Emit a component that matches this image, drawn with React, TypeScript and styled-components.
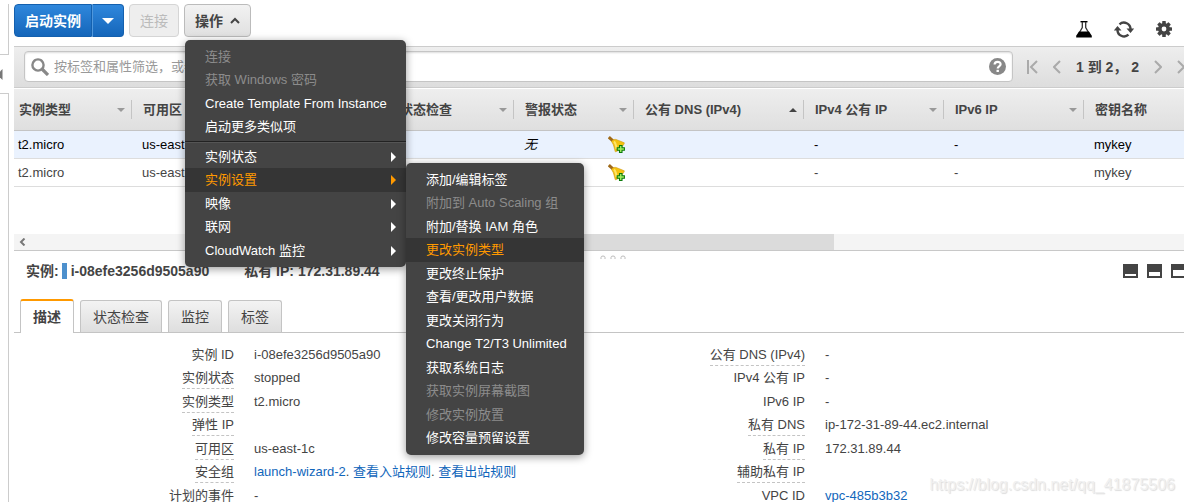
import React from "react";
import styled, { createGlobalStyle, css } from "styled-components";

const GlobalStyle = createGlobalStyle`
  * { box-sizing: border-box; }
  body {
    margin: 0;
    background: #fff;
    color: #444;
    font: 13px/20px "Liberation Sans", "Noto Sans CJK SC", sans-serif;
  }
  button, input { font: inherit; color: inherit; }
  ul, dl, dd, dt { margin: 0; padding: 0; list-style: none; }
`;

const Page = styled.div`
  position: relative;
  display: flex;
  gap: 5px;
  height: 100vh;
  overflow: hidden;
`;

/* ---- collapsed navigation rail ---- */
const Rail = styled.aside`
  flex: none;
  width: 9px;
  padding-top: 4px;
  display: flex;
  flex-direction: column;
`;
const RailTop = styled.div`
  height: 51px;
  border-right: 1px solid #ccc;
  border-bottom: 1px solid #ccc;
`;
const RailHandle = styled.button`
  height: 38px;
  padding: 0;
  border: 0;
  background: none;
  display: flex;
  align-items: center;
`;
const RailBottom = styled.div`
  flex: 1;
  border-right: 1px solid #ccc;
  border-top: 1px solid #ccc;
`;

/* The workspace runs on past the right edge of the window. */
const Main = styled.main`
  flex: 1;
  min-width: 0;
  margin-right: -28px;
`;

/* ---- toolbar ---- */
const Toolbar = styled.div`
  display: flex;
  gap: 5px;
  height: 46px;
  padding: 4px 40px 0 0;
`;
const Split = styled.div`
  display: flex;
  height: 33px;
`;
const PrimaryButton = styled.button<{ $side: "left" | "right" }>`
  height: 33px;
  padding: 0 10px;
  border: 1px solid #1460ae;
  border-radius: ${(p) => (p.$side === "left" ? "4px 0 0 4px" : "0 4px 4px 0")};
  ${(p) =>
    p.$side === "right" &&
    css`
      padding: 0 9px;
      border-left: 1px solid #4f97dc;
    `}
  background: linear-gradient(#2f87dc, #1566ba);
  color: #fff;
  font-size: 14px;
  font-weight: bold;
  display: flex;
  align-items: center;
`;
const PlainButton = styled.button`
  height: 33px;
  padding: 0 10px;
  border: 1px solid #bbb;
  border-radius: 4px;
  background: linear-gradient(#f2f2f2, #e0e0e0);
  font-size: 14px;
  font-weight: bold;
  display: flex;
  align-items: center;
  gap: 7px;
  &:disabled {
    color: #bbb;
    border-color: #d5d5d5;
    background: #eee;
    font-weight: normal;
  }
`;
const Tools = styled.div`
  display: flex;
  align-items: center;
  gap: 22px;
  height: 50px;
  margin-left: auto;
`;
const IconButton = styled.button`
  display: flex;
  padding: 0;
  border: 0;
  background: none;
`;

/* ---- menus ---- */
const MenuAnchor = styled.div`
  position: relative;
`;
const MenuPanel = styled.div<{ $sub?: boolean }>`
  position: absolute;
  z-index: 5;
  top: ${(p) => (p.$sub ? "-5px" : "36px")};
  left: ${(p) => (p.$sub ? "100%" : "1px")};
  width: ${(p) => (p.$sub ? "178px" : "221px")};
  padding: 5px 0;
  border-radius: 5px;
  background: #444;
  box-shadow: 0 2px 8px rgba(0, 0, 0, 0.4);
`;
const MenuGroup = styled.ul`
  & + & {
    margin-top: 2px;
    padding-top: 3px;
    border-top: 1px solid #222;
    box-shadow: inset 0 1px #555;
  }
`;
const MenuItem = styled.li`
  position: relative;
  height: 23px;
  &:nth-child(even) { height: 24px; }
`;
const MenuButton = styled.button<{ $active?: boolean }>`
  width: 100%;
  height: 100%;
  padding: 0 9px 0 20px;
  border: 0;
  background: ${(p) => (p.$active ? "#353535" : "none")};
  color: ${(p) => (p.$active ? "#f90" : "#fff")};
  display: flex;
  align-items: center;
  justify-content: space-between;
  text-align: left;
  white-space: nowrap;
  &:disabled { color: #8c8c8c; }
`;

/* ---- filter bar ---- */
const FilterBar = styled.div`
  display: flex;
  align-items: center;
  gap: 14px;
  padding: 4px 24px 5px 10px;
  border-top: 1px solid #ccc;
  border-bottom: 1px solid #ccc;
  background: linear-gradient(#eee, #ddd);
`;
const SearchBox = styled.label`
  flex: 1;
  display: flex;
  align-items: center;
  gap: 5px;
  height: 31px;
  padding: 0 6px;
  border: 1px solid #c5c5c5;
  border-radius: 4px;
  background: #fff;
  box-shadow: inset 0 1px 2px #ddd;
`;
const SearchInput = styled.input`
  flex: 1;
  min-width: 0;
  padding: 0;
  border: 0;
  outline: 0;
  background: none;
  &::placeholder { color: #999; opacity: 1; }
`;
const Pager = styled.nav`
  display: flex;
  align-items: center;
  gap: 15px;
  font-size: 14px;
  font-weight: bold;
  white-space: nowrap;
`;

/* ---- instance table ---- */
const Table = styled.table`
  width: 100%;
  table-layout: fixed;
  border-collapse: separate;
  border-spacing: 0;
`;
const HeadCell = styled.th`
  height: 43px;
  padding: 0;
  border-top: 1px solid #fff;
  border-bottom: 1px solid #c4c4c4;
  background: linear-gradient(#eee, #dfdfdf);
`;
const SortButton = styled.button`
  display: flex;
  align-items: center;
  justify-content: space-between;
  width: 100%;
  height: 19px;
  padding: 0 6px 0 11px;
  border: 0;
  border-right: 1px solid #c4c4c4;
  box-shadow: 1px 0 #fff;
  background: none;
  font-weight: bold;
  white-space: nowrap;
  th:first-child & { padding-left: 5px; }
`;
const Row = styled.tr<{ $selected?: boolean }>`
  background: ${(p) => (p.$selected ? "#eaf2fe" : "#fff")};
  color: ${(p) => (p.$selected ? "#000" : "#444")};
`;
const Cell = styled.td`
  height: 28px;
  padding: 0 9px 0 10px;
  border-bottom: 1px solid #ddd;
  white-space: nowrap;
  &:first-child { padding-left: 4px; }
`;
const AlarmCell = styled.div`
  display: flex;
  align-items: center;
  justify-content: space-between;
  font-style: italic;
`;
const ScrollTrack = styled.div`
  display: flex;
  align-items: center;
  gap: 380px;
  height: 17px;
  margin-top: 47px;
  padding-left: 5px;
  border-bottom: 1px solid #c8c8c8;
  background: #f4f4f4;
`;
const ScrollThumb = styled.div`
  width: 428px;
  height: 16px;
  background: #dbdbdb;
`;

/* ---- detail pane ---- */
const Resizer = styled.div`
  display: flex;
  justify-content: center;
  align-items: flex-end;
  height: 8px;
`;
const DetailHead = styled.header`
  display: flex;
  align-items: center;
  height: 24px;
  padding: 0 26px 0 12px;
  font-size: 14px;
  font-weight: bold;
`;
const Marker = styled.i`
  width: 5px;
  height: 16px;
  margin: 0 4px 0 3px;
  background: #4d90cd;
`;
const PrivateIp = styled.span`
  margin-left: 35px;
`;
const LayoutButtons = styled.div`
  display: flex;
  gap: 9px;
  margin-left: auto;
`;
const LayoutButton = styled.button<{ $open: number }>`
  width: 15px;
  height: 14px;
  padding: 0;
  border: 2px solid #444;
  border-top-width: ${(p) => 12 - p.$open}px;
  background: #fff;
`;
const Tabs = styled.div`
  display: flex;
  align-items: flex-end;
  gap: 6px;
  height: 50px;
  padding-left: 6px;
  border-bottom: 1px solid #c4c4c4;
`;
const Tab = styled.button<{ $active?: boolean }>`
  height: 32px;
  padding: 0 12px;
  border: 1px solid #c4c4c4;
  border-bottom: 0;
  border-radius: 3px 3px 0 0;
  background: linear-gradient(#f3f3f3, #dedede);
  font-size: 14px;
  white-space: nowrap;
  ${(p) =>
    p.$active &&
    css`
      height: 34px;
      margin-bottom: -1px;
      border-top: 2px solid #f90;
      background: #fff;
      font-weight: bold;
    `}
`;
const Details = styled.div`
  display: grid;
  grid-template-columns: 1fr 1fr;
  padding: 10px 42px 0 14px;
`;
const DetailRow = styled.div`
  display: grid;
  grid-template-columns: 206px 1fr;
  gap: 20px;
  height: 23px;
  line-height: 23px;
  white-space: nowrap;
  &:nth-child(even) { height: 24px; line-height: 24px; }
`;
const Term = styled.dt<{ $hint?: boolean }>`
  justify-self: end;
  height: 23px;
  border-bottom: ${(p) => (p.$hint ? "1px dashed #c4c4c4" : "0")};
`;
const Link = styled.a`
  color: #1166bb;
  text-decoration: none;
`;
const Watermark = styled.div`
  position: absolute;
  right: 9px;
  bottom: 7px;
  color: #f0f0f0;
  font-size: 16px;
  text-shadow: 1px 1px 1px #dcdcdc;
`;

/* ---- icons ---- */
const Caret = ({ up, color = "#999" }: { up?: boolean; color?: string }) => (
  <svg width="8" height="4" viewBox="0 0 8 4" fill={color}>
    <path d={up ? "M0 4h8L4 0z" : "M0 0h8L4 4z"} />
  </svg>
);
const Chevron = ({ right, bar }: { right?: boolean; bar?: boolean }) => (
  <svg width={bar ? 11 : 8} height="14" viewBox={bar ? "-3 0 11 14" : "0 0 8 14"} fill="none" stroke="#aaa" strokeWidth="2">
    {bar && <path d={right ? "M7 0v14" : "M-2 0v14"} />}
    <path d={right ? (bar ? "M-2 1l6 6-6 6" : "M1 1l6 6-6 6") : "M7 1L1 7l6 6"} />
  </svg>
);
const Flask = () => (
  <svg width="16" height="17" viewBox="0 0 16 17">
    <path d="M4.500 .7h7" stroke="#000" strokeWidth="1.400" />
    <path d="M6.300 1v5.500L2 14M9.700 1v5.500L14 14" fill="none" stroke="#333" strokeWidth="1.300" />
    <path d="M3 10.500h10l2.800 4.300V16.500H.2v-1.700z" fill="#000" />
  </svg>
);
const Refresh = () => (
  <svg width="20" height="17" viewBox="0 0 20 17" fill="none" stroke="#444" strokeWidth="2.400">
    <path d="M5.500 3.300A6.600 6.600 0 0 1 16.500 8.500M14.500 13.700A6.600 6.600 0 0 1 3.500 8.500" />
    <path d="M12.500 7.500H20.200L16.500 12zM-.2 9.500H7.500L3.500 5z" fill="#444" stroke="none" />
  </svg>
);
const Gear = () => (
  <svg width="16" height="16" viewBox="0 0 16 16">
    <g fill="#444">
      {[0, 45, 90, 135].map((a) => (
        <rect key={a} x="6.200" y="0" width="3.600" height="16" rx=".6" transform={`rotate(${a} 8 8)`} />
      ))}
      <circle cx="8" cy="8" r="6" />
    </g>
    <circle cx="8" cy="8" r="2.400" fill="#fff" />
  </svg>
);
const Bell = () => (
  <svg width="17" height="17" viewBox="0 0 17 17">
    <path d="M.8 1.200l4.400 4" stroke="#a06a18" strokeWidth="3" />
    <path d="M3.500 5.500C5 3.200 7 2.800 9.500 4l6.800 2.800c.7 1.400-6.800 9.400-9 9-1.200-3-1-6.500-3.800-10.300z" fill="#f4c20f" stroke="#cf9a1c" strokeWidth=".6" />
    <path d="M6 5.500c2 2 2.300 5 2.600 7.500" stroke="#ffe566" strokeWidth="2" fill="none" />
    <path d="M11.500 9.500h2.500v2.300h2.400v2.500H14v2.300h-2.500v-2.300H9.200v-2.500h2.300z" fill="#a4f060" stroke="#0b7a0b" strokeWidth="1.100" />
  </svg>
);

type Entry = { text: string; off?: boolean; active?: boolean; sub?: boolean };

const actions: Entry[][] = [
  [
    { text: "连接", off: true },
    { text: "获取 Windows 密码", off: true },
    { text: "Create Template From Instance" },
    { text: "启动更多类似项" },
  ],
  [
    { text: "实例状态", sub: true },
    { text: "实例设置", sub: true, active: true },
    { text: "映像", sub: true },
    { text: "联网", sub: true },
    { text: "CloudWatch 监控", sub: true },
  ],
];
const settings: Entry[] = [
  { text: "添加/编辑标签" },
  { text: "附加到 Auto Scaling 组", off: true },
  { text: "附加/替换 IAM 角色" },
  { text: "更改实例类型", active: true },
  { text: "更改终止保护" },
  { text: "查看/更改用户数据" },
  { text: "更改关闭行为" },
  { text: "Change T2/T3 Unlimited" },
  { text: "获取系统日志" },
  { text: "获取实例屏幕截图", off: true },
  { text: "修改实例放置", off: true },
  { text: "修改容量预留设置" },
];

const Menu = ({ groups, sub }: { groups: Entry[][]; sub?: boolean }) => (
  <MenuPanel $sub={sub}>
    {groups.map((group, i) => (
      <MenuGroup key={i}>
        {group.map((e) => (
          <MenuItem key={e.text}>
            <MenuButton disabled={e.off} $active={e.active}>
              {e.text}
              {e.sub && (
                <svg width="6" height="10" viewBox="0 0 6 10" fill="currentColor">
                  <path d="M0 0l5 5-5 5z" />
                </svg>
              )}
            </MenuButton>
            {e.sub && e.active && <Menu groups={[settings]} sub />}
          </MenuItem>
        ))}
      </MenuGroup>
    ))}
  </MenuPanel>
);

const columns: { name: string; width?: number; sorted?: boolean }[] = [
  { name: "实例类型", width: 118 },
  { name: "可用区", width: 257 },
  { name: "状态检查", width: 125 },
  { name: "警报状态", width: 120 },
  { name: "公有 DNS (IPv4)", width: 170, sorted: true },
  { name: "IPv4 公有 IP", width: 140 },
  { name: "IPv6 IP", width: 140 },
  { name: "密钥名称" },
];

type Detail = { term: string; hint?: boolean; value?: React.ReactNode };
const left: Detail[] = [
  { term: "实例 ID", value: "i-08efe3256d9505a90" },
  { term: "实例状态", hint: true, value: "stopped" },
  { term: "实例类型", hint: true, value: "t2.micro" },
  { term: "弹性 IP", hint: true },
  { term: "可用区", hint: true, value: "us-east-1c" },
  {
    term: "安全组",
    hint: true,
    value: (
      <>
        <Link href="#group">launch-wizard-2</Link>. <Link href="#inbound">查看入站规则</Link>.{" "}
        <Link href="#outbound">查看出站规则</Link>
      </>
    ),
  },
  { term: "计划的事件", value: "-" },
];
const right: Detail[] = [
  { term: "公有 DNS (IPv4)", hint: true, value: "-" },
  { term: "IPv4 公有 IP", value: "-" },
  { term: "IPv6 IP", value: "-" },
  { term: "私有 DNS", hint: true, value: "ip-172-31-89-44.ec2.internal" },
  { term: "私有 IP", hint: true, value: "172.31.89.44" },
  { term: "辅助私有 IP", hint: true },
  { term: "VPC ID", value: <Link href="#vpc">vpc-485b3b32</Link> },
];

const DetailList = ({ items }: { items: Detail[] }) => (
  <dl>
    {items.map((d) => (
      <DetailRow key={d.term}>
        <Term $hint={d.hint}>{d.term}</Term>
        <dd>{d.value}</dd>
      </DetailRow>
    ))}
  </dl>
);

export default function App() {
  return (
    <Page>
      <GlobalStyle />
      <Rail>
        <RailTop />
        <RailHandle aria-label="展开导航">
          <svg width="3" height="11" viewBox="0 0 3 11" fill="#777">
            <path d="M0 2.500L2.500 0v11L0 8.500z" />
          </svg>
        </RailHandle>
        <RailBottom />
      </Rail>
      <Main>
        <Toolbar>
          <Split>
            <PrimaryButton $side="left">启动实例</PrimaryButton>
            <PrimaryButton $side="right" aria-label="更多启动选项">
              <svg width="12" height="6" viewBox="0 0 12 6" fill="#fff">
                <path d="M0 0h12L6 6z" />
              </svg>
            </PrimaryButton>
          </Split>
          <PlainButton disabled>连接</PlainButton>
          <MenuAnchor>
            <PlainButton aria-expanded="true">
              操作
              <svg width="10" height="7" viewBox="0 0 10 7" fill="none" stroke="#444" strokeWidth="2">
                <path d="M1 6l4-4 4 4" />
              </svg>
            </PlainButton>
            <Menu groups={actions} />
          </MenuAnchor>
          <Tools>
            <IconButton aria-label="实验"><Flask /></IconButton>
            <IconButton aria-label="刷新"><Refresh /></IconButton>
            <IconButton aria-label="设置"><Gear /></IconButton>
          </Tools>
        </Toolbar>

        <FilterBar>
          <SearchBox>
            <svg width="18" height="18" viewBox="0 0 18 18" fill="none" stroke="#888">
              <circle cx="7" cy="7" r="5.600" strokeWidth="2.400" />
              <path d="M11 11l6 6" strokeWidth="3.200" />
            </svg>
            <SearchInput aria-label="筛选" placeholder="按标签和属性筛选，或者按关键字搜索" />
            <svg width="17" height="17" viewBox="0 0 17 17" fill="none">
              <circle cx="8.500" cy="8.500" r="8.500" fill="#888" />
              <path d="M5.600 6.600c0-3.800 6-3.600 6-.3 0 2.200-2.900 2-2.900 4.200" stroke="#fff" strokeWidth="2.200" />
              <path d="M7.500 11.800h2.400v2.200H7.500z" fill="#fff" />
            </svg>
          </SearchBox>
          <Pager>
            <IconButton aria-label="首页"><Chevron bar /></IconButton>
            <IconButton aria-label="上一页"><Chevron /></IconButton>
            <span>1 到 2， 2</span>
            <IconButton aria-label="下一页"><Chevron right /></IconButton>
            <IconButton aria-label="末页"><Chevron right bar /></IconButton>
          </Pager>
        </FilterBar>

        <Table>
          <colgroup>
            {columns.map((c) => (
              <col key={c.name} width={c.width} />
            ))}
          </colgroup>
          <thead>
            <tr>
              {columns.map((c) => (
                <HeadCell key={c.name}>
                  <SortButton>
                    {c.name}
                    <Caret up={c.sorted} color={c.sorted ? "#444" : "#999"} />
                  </SortButton>
                </HeadCell>
              ))}
            </tr>
          </thead>
          <tbody>
            {[true, false].map((selected) => (
              <Row key={String(selected)} $selected={selected}>
                <Cell>t2.micro</Cell>
                <Cell>us-east-1c</Cell>
                <Cell />
                <Cell>
                  <AlarmCell>
                    <span>{selected ? "无" : ""}</span>
                    <Bell />
                  </AlarmCell>
                </Cell>
                <Cell />
                <Cell>-</Cell>
                <Cell>-</Cell>
                <Cell>mykey</Cell>
              </Row>
            ))}
          </tbody>
        </Table>
        <ScrollTrack>
          <svg width="7" height="8" viewBox="0 0 7 8" fill="none" stroke="#777" strokeWidth="2">
            <path d="M5.500 0.500L2 4l3.500 3.500" />
          </svg>
          <ScrollThumb />
        </ScrollTrack>

        <Resizer>
          <svg width="26" height="4" viewBox="0 0 26 4" fill="none" stroke="#bbb">
            <path d="M1 4V2.500q0-1.500 2-1.500t2 1.500V4M11 4V2.500q0-1.500 2-1.500t2 1.500V4M21 4V2.500q0-1.500 2-1.500t2 1.500V4" />
          </svg>
        </Resizer>
        <DetailHead>
          实例:
          <Marker />
          i-08efe3256d9505a90
          <PrivateIp>私有 IP: 172.31.89.44</PrivateIp>
          <LayoutButtons>
            <LayoutButton $open={2} aria-label="收起" />
            <LayoutButton $open={4} aria-label="半屏" />
            <LayoutButton $open={6} aria-label="展开" />
          </LayoutButtons>
        </DetailHead>
        <Tabs>
          <Tab $active>描述</Tab>
          <Tab>状态检查</Tab>
          <Tab>监控</Tab>
          <Tab>标签</Tab>
        </Tabs>
        <Details>
          <DetailList items={left} />
          <DetailList items={right} />
        </Details>
      </Main>
      <Watermark>https://blog.csdn.net/qq_41875506</Watermark>
    </Page>
  );
}
